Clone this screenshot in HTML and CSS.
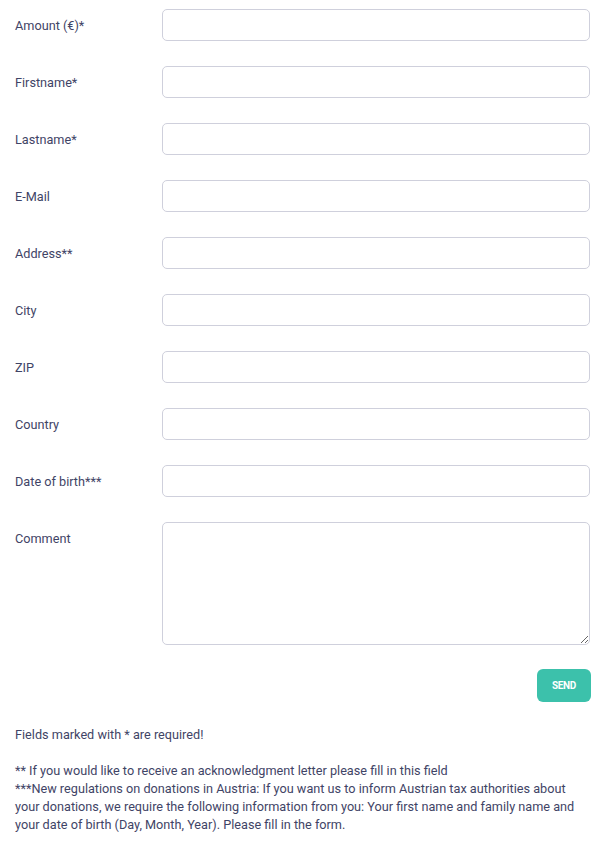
FILE: index.html
```html
<!DOCTYPE html>
<html>
<head>
<meta charset="utf-8">
<link rel="stylesheet" href="styles.css">
</head>
<body>
<form class="form">
  <div class="row"><label class="label">Amount (€)*</label><input class="field" type="text"></div>
  <div class="row"><label class="label">Firstname*</label><input class="field" type="text"></div>
  <div class="row"><label class="label">Lastname*</label><input class="field" type="text"></div>
  <div class="row"><label class="label">E-Mail</label><input class="field" type="text"></div>
  <div class="row"><label class="label">Address**</label><input class="field" type="text"></div>
  <div class="row"><label class="label">City</label><input class="field" type="text"></div>
  <div class="row"><label class="label">ZIP</label><input class="field" type="text"></div>
  <div class="row"><label class="label">Country</label><input class="field" type="text"></div>
  <div class="row"><label class="label">Date of birth***</label><input class="field" type="text"></div>
  <div class="row row-top"><label class="label label-top">Comment</label><textarea class="field area"></textarea></div>
  <div class="actions"><button class="send" type="button">SEND</button></div>
  <p class="note">Fields marked with * are required!</p>
  <p class="note">** If you would like to receive an acknowledgment letter please fill in this field<br>***New regulations on donations in Austria: If you want us to inform Austrian tax authorities about your donations, we require the following information from you: Your first name and family name and your date of birth (Day, Month, Year). Please fill in the form.</p>
</form>
</body>
</html>
```
FILE: styles.css
```css
html, body {
  margin: 0;
  padding: 0;
  background: #ffffff;
}
body {
  font-family: Roboto, "Liberation Sans", sans-serif;
  font-size: 12.7px;
  color: #3f4466;
}
.form {
  padding: 9px 19px 0 15px;
  display: flex;
  flex-direction: column;
}
.row {
  display: flex;
  align-items: center;
  margin-bottom: 25px;
}
.row-top {
  align-items: flex-start;
  margin-bottom: 24px;
}
.label {
  width: 147px;
  flex: none;
}
.label-top {
  padding-top: 9px;
}
.field {
  flex: 1;
  height: 32px;
  box-sizing: border-box;
  border: 1px solid #cfd0dc;
  border-radius: 5px;
  background: #fff;
  margin: 0;
  padding: 0 10px;
  font: inherit;
  outline: none;
}
.area {
  height: 123px;
  resize: vertical;
}
.actions {
  display: flex;
  justify-content: flex-end;
  margin-right: -1px;
}
.send {
  width: 54px;
  height: 33px;
  border: none;
  border-radius: 6px;
  background: #3cc1ab;
  color: #ffffff;
  font-family: Roboto, "Liberation Sans", sans-serif;
  font-weight: 700;
  font-size: 10px;
  letter-spacing: -0.3px;
  padding: 0;
}
.note {
  margin: 24px 0 0 0;
  line-height: 18px;
}
.note + .note {
  margin-top: 18px;
}
```
